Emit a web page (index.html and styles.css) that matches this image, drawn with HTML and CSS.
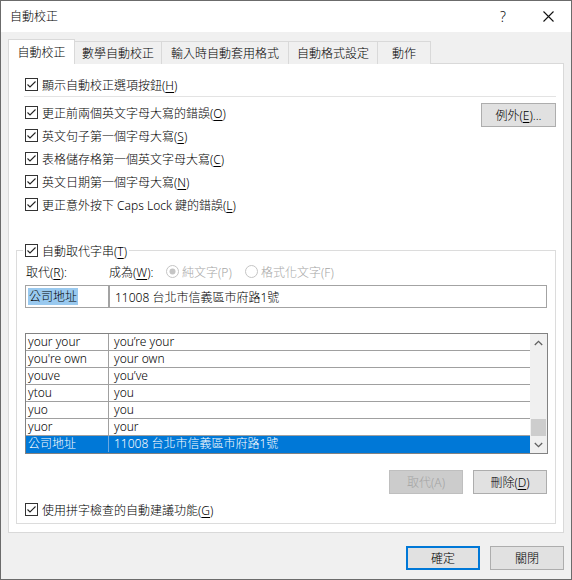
FILE: index.html
```html
<!DOCTYPE html>
<html lang="zh-Hant">
<head>
<meta charset="utf-8">
<title>自動校正</title>
<link rel="stylesheet" href="styles.css">
</head>
<body>
<div class="window">
  <header class="titlebar">
    <span class="title">自動校正</span>
    <span class="caption-btn help">?</span>
    <span class="caption-btn close">
      <svg width="11" height="11" viewBox="0 0 11 11"><path d="M0.5 0.5L10.5 10.5M10.5 0.5L0.5 10.5" stroke="#111" stroke-width="1.1" fill="none"/></svg>
    </span>
  </header>

  <div class="client">
    <nav class="tabs">
      <div class="tab active t1">自動校正</div>
      <div class="tab t2">數學自動校正</div>
      <div class="tab t3">輸入時自動套用格式</div>
      <div class="tab t4">自動格式設定</div>
      <div class="tab t5">動作</div>
    </nav>

    <section class="panel">
      <label class="check top-check">
        <svg class="box" width="13" height="13" viewBox="0 0 13 13"><rect x="0.5" y="0.5" width="12" height="12" fill="#fff" stroke="#333"/><path d="M2.5 6.5L5 9L10.5 3.5" stroke="#222" stroke-width="1.1" fill="none"/></svg>
        <span>顯示自動校正選項按鈕(<u>H</u>)</span>
      </label>
      <div class="sep"></div>

      <div class="opts">
        <div class="opt-list">
          <label class="check">
            <svg class="box" width="13" height="13" viewBox="0 0 13 13"><rect x="0.5" y="0.5" width="12" height="12" fill="#fff" stroke="#333"/><path d="M2.5 6.5L5 9L10.5 3.5" stroke="#222" stroke-width="1.1" fill="none"/></svg>
            <span>更正前兩個英文字母大寫的錯誤(<u>O</u>)</span>
          </label>
          <label class="check">
            <svg class="box" width="13" height="13" viewBox="0 0 13 13"><rect x="0.5" y="0.5" width="12" height="12" fill="#fff" stroke="#333"/><path d="M2.5 6.5L5 9L10.5 3.5" stroke="#222" stroke-width="1.1" fill="none"/></svg>
            <span>英文句子第一個字母大寫(<u>S</u>)</span>
          </label>
          <label class="check">
            <svg class="box" width="13" height="13" viewBox="0 0 13 13"><rect x="0.5" y="0.5" width="12" height="12" fill="#fff" stroke="#333"/><path d="M2.5 6.5L5 9L10.5 3.5" stroke="#222" stroke-width="1.1" fill="none"/></svg>
            <span>表格儲存格第一個英文字母大寫(<u>C</u>)</span>
          </label>
          <label class="check">
            <svg class="box" width="13" height="13" viewBox="0 0 13 13"><rect x="0.5" y="0.5" width="12" height="12" fill="#fff" stroke="#333"/><path d="M2.5 6.5L5 9L10.5 3.5" stroke="#222" stroke-width="1.1" fill="none"/></svg>
            <span>英文日期第一個字母大寫(<u>N</u>)</span>
          </label>
          <label class="check">
            <svg class="box" width="13" height="13" viewBox="0 0 13 13"><rect x="0.5" y="0.5" width="12" height="12" fill="#fff" stroke="#333"/><path d="M2.5 6.5L5 9L10.5 3.5" stroke="#222" stroke-width="1.1" fill="none"/></svg>
            <span>更正意外按下 Caps Lock 鍵的錯誤(<u>L</u>)</span>
          </label>
        </div>
        <button class="btn exceptions">例外(<u>E</u>)...</button>
      </div>

      <fieldset class="group">
        <legend class="check legend">
          <svg class="box" width="13" height="13" viewBox="0 0 13 13"><rect x="0.5" y="0.5" width="12" height="12" fill="#fff" stroke="#333"/><path d="M2.5 6.5L5 9L10.5 3.5" stroke="#222" stroke-width="1.1" fill="none"/></svg>
          <span>自動取代字串(<u>T</u>)</span>
        </legend>

        <div class="repl-head">
          <span class="lbl-from">取代(<u>R</u>):</span>
          <span class="lbl-to">成為(<u>W</u>):</span>
          <span class="radio r-plain">
            <svg width="13" height="13" viewBox="0 0 13 13"><circle cx="6.5" cy="6.5" r="6" fill="#fff" stroke="#c4c4c4"/><circle cx="6.5" cy="6.5" r="3" fill="#c4c4c4"/></svg>
            <span>純文字(P)</span>
          </span>
          <span class="radio">
            <svg width="13" height="13" viewBox="0 0 13 13"><circle cx="6.5" cy="6.5" r="6" fill="#fff" stroke="#c4c4c4"/></svg>
            <span>格式化文字(F)</span>
          </span>
        </div>

        <div class="repl-inputs">
          <div class="field from"><span class="selected-text">公司地址</span></div>
          <div class="field to">11008 台北市信義區市府路1號</div>
        </div>

        <div class="list">
          <div class="rows">
            <div class="row"><span class="c1">your your</span><span class="c2">you’re your</span></div>
            <div class="row"><span class="c1">you're own</span><span class="c2">your own</span></div>
            <div class="row"><span class="c1">youve</span><span class="c2">you’ve</span></div>
            <div class="row"><span class="c1">ytou</span><span class="c2">you</span></div>
            <div class="row"><span class="c1">yuo</span><span class="c2">you</span></div>
            <div class="row"><span class="c1">yuor</span><span class="c2">your</span></div>
            <div class="row current"><span class="c1">公司地址</span><span class="c2">11008 台北市信義區市府路1號</span></div>
          </div>
          <div class="scrollbar">
            <div class="arrow">
              <svg width="9" height="6" viewBox="0 0 9 6"><path d="M0.8 5L4.5 1.3L8.2 5" stroke="#606060" stroke-width="1.3" fill="none"/></svg>
            </div>
            <div class="track"><div class="thumb"></div></div>
            <div class="arrow">
              <svg width="9" height="6" viewBox="0 0 9 6"><path d="M0.8 1L4.5 4.7L8.2 1" stroke="#606060" stroke-width="1.3" fill="none"/></svg>
            </div>
          </div>
        </div>

        <div class="actions">
          <button class="btn disabled" disabled>取代(A)</button>
          <button class="btn">刪除(<u>D</u>)</button>
        </div>

        <label class="check bottom-check">
          <svg class="box" width="13" height="13" viewBox="0 0 13 13"><rect x="0.5" y="0.5" width="12" height="12" fill="#fff" stroke="#333"/><path d="M2.5 6.5L5 9L10.5 3.5" stroke="#222" stroke-width="1.1" fill="none"/></svg>
          <span>使用拼字檢查的自動建議功能(<u>G</u>)</span>
        </label>
      </fieldset>
    </section>

    <footer class="dialog-buttons">
      <button class="btn default">確定</button>
      <button class="btn">關閉</button>
    </footer>
  </div>
</div>
</body>
</html>
```

FILE: styles.css
```css
* {
  box-sizing: border-box;
}

html,
body {
  margin: 0;
  padding: 0;
}

body {
  width: 572px;
  height: 580px;
  overflow: hidden;
  font-family: "Noto Sans", "Noto Sans CJK TC", sans-serif;
  font-size: 12px;
  font-weight: 300;
  color: #000;
  background: #fff;
}

u {
  text-decoration-thickness: 1px;
  text-underline-offset: 2px;
}

/* window frame */
.window {
  width: 572px;
  height: 580px;
  border: 1px solid #6b6b6b;
  background: #f0f0f0;
  display: flex;
  flex-direction: column;
}

.titlebar {
  flex: none;
  height: 31px;
  background: #fff;
  display: flex;
  align-items: center;
  padding-left: 9px;
}

.title {
  flex: 1;
  line-height: 31px;
}

.caption-btn {
  height: 31px;
  display: flex;
  align-items: center;
  justify-content: center;
}

.help {
  width: 46px;
  font-size: 14px;
  color: #111;
}

.close {
  width: 45px;
}

/* client area */
.client {
  flex: 1;
  display: flex;
  flex-direction: column;
  padding: 7px 7px 0 7px;
}

.tabs {
  display: flex;
  align-items: flex-end;
  height: 25px;
  margin-bottom: -1px;
  position: relative;
  z-index: 1;
}

.tab {
  height: 23px;
  border: 1px solid #d9d9d9;
  border-bottom: none;
  background: #f0f0f0;
  display: flex;
  align-items: center;
  justify-content: center;
  margin-left: -1px;
  white-space: nowrap;
}

.tab.active {
  height: 25px;
  background: #fff;
  margin-left: 0;
  padding-bottom: 1px;
  position: relative;
  z-index: 2;
}

.t1 { width: 67px; }
.t2 { width: 88px; }
.t3 { width: 128px; }
.t4 { width: 90px; }
.t5 { width: 54px; }

.panel {
  width: 556px;
  height: 470px;
  background: #fff;
  border: 1px solid #d9d9d9;
  padding-top: 9px;
  display: flex;
  flex-direction: column;
}

/* check boxes */
.check {
  display: flex;
  align-items: center;
  gap: 4px;
  height: 23px;
  white-space: nowrap;
}

.check .box {
  flex: none;
}

.top-check,
.opt-list .check {
  padding-left: 16px;
}

.sep {
  height: 1px;
  background: #e3e3e3;
  margin: 0 7px 0 15px;
}

.opts {
  display: flex;
  justify-content: space-between;
  margin-top: 4px;
  padding-right: 7px;
}

/* push buttons */
.btn {
  font: inherit;
  color: #000;
  width: 74px;
  height: 24px;
  padding: 0;
  background: #e1e1e1;
  border: 1px solid #adadad;
  border-radius: 0;
  white-space: nowrap;
}

.exceptions {
  width: 75px;
  margin-top: 2px;
}

.btn.disabled {
  background: #cccccc;
  border-color: #bfbfbf;
  color: #a3a3a3;
}

.btn.default {
  border: 2px solid #0078d7;
}

/* replacement group */
.group {
  margin: 26px 7px 0 7px;
  padding: 1px 7px 2px 8px;
  border: 1px solid #dcdcdc;
  min-width: 0;
}

.legend {
  padding: 0 2px;
  margin-left: -2px;
  height: 17px;
}

.repl-head {
  display: flex;
  align-items: center;
  height: 23px;
  white-space: nowrap;
}

.lbl-from {
  width: 84px;
  padding-left: 1px;
}

.lbl-to {
  width: 57px;
}

.radio {
  display: flex;
  align-items: center;
  gap: 3px;
  color: #a6a6a6;
}

.r-plain {
  width: 79px;
}

.repl-inputs {
  display: flex;
  margin-top: 2px;
  height: 23px;
}

.field {
  border: 1px solid #a3a3a3;
  background: #fff;
  display: flex;
  align-items: center;
  white-space: nowrap;
}

.field.from {
  width: 84px;
  padding-left: 2px;
}

.field.to {
  width: 438px;
  padding-left: 5px;
}

.selected-text {
  background: #99c9ef;
  line-height: 17px;
  padding: 0 1px;
}

/* replacement list */
.list {
  margin-top: 25px;
  height: 121px;
  border: 1px solid #828282;
  display: flex;
  background: #fff;
}

.rows {
  flex: 1;
  display: flex;
  flex-direction: column;
}

.row {
  height: 17px;
  border-bottom: 1px solid #a0a0a0;
  display: flex;
  align-items: center;
  white-space: nowrap;
}

.c1 {
  width: 83px;
  height: 16px;
  line-height: 16px;
  padding-left: 2px;
  border-right: 1px solid #a0a0a0;
}

.c2 {
  padding-left: 5px;
  line-height: 16px;
}

.row.current {
  background: #0078d7;
  color: #fff;
  border-bottom-color: #0078d7;
}

.row.current .c1 {
  border-right-color: #6aa8e2;
}

.scrollbar {
  width: 17px;
  flex: none;
  background: #f0f0f0;
  display: flex;
  flex-direction: column;
}

.arrow {
  height: 17px;
  display: flex;
  align-items: center;
  justify-content: center;
}

.track {
  flex: 1;
  display: flex;
  flex-direction: column;
  justify-content: flex-end;
  padding: 0 1px;
}

.thumb {
  height: 17px;
  background: #cdcdcd;
}

.actions {
  display: flex;
  justify-content: flex-end;
  gap: 10px;
  margin-top: 16px;
  margin-right: 1px;
}

.bottom-check {
  margin-top: 4px;
}

/* dialog buttons */
.dialog-buttons {
  display: flex;
  justify-content: flex-end;
  gap: 10px;
  margin-top: 13px;
  padding-right: 0;
}
```
